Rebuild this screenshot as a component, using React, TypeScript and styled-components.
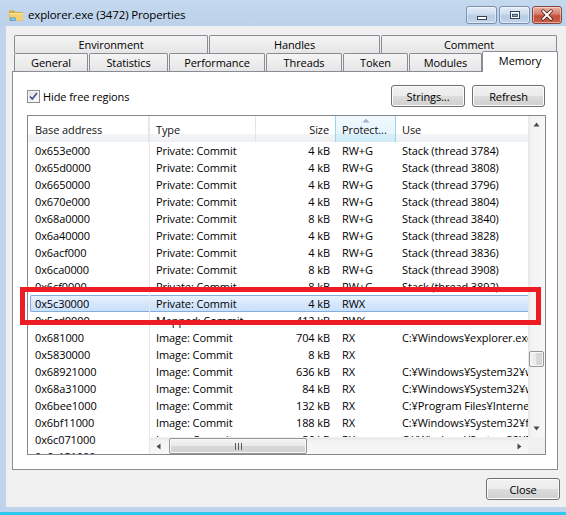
import React from 'react';
import styled, { createGlobalStyle, css } from 'styled-components';

const FONT = `"Open Sans", "Noto Sans", "Liberation Sans", sans-serif`;
const FS = '11px';
const LS = '-0.1px';

const GlobalStyle = createGlobalStyle`
  html, body { margin: 0; padding: 0; }
  body {
    font-family: ${FONT};
    font-size: ${FS};
    letter-spacing: ${LS};
    color: #000;
    background: #ffffff;
    overflow: hidden;
  }
  * { box-sizing: border-box; }
`;

const Window = styled.div`
  position: relative;
  width: 566px;
  height: 515px;
  display: flex;
  flex-direction: column;
  background: #bfd4ec;
  overflow: hidden;
`;

const TitleBar = styled.div`
  height: 26px;
  flex: none;
  display: flex;
  align-items: flex-start;
  padding-left: 8px;
  background: linear-gradient(#c4d8ee, #bcd2ea);
`;

const TitleIcon = styled.svg`
  width: 16px;
  height: 16px;
  margin-top: 7px;
  margin-right: 4px;
  flex: none;
`;

const TitleText = styled.div`
  font-size: 11.5px;
  line-height: 16px;
  margin-top: 7px;
  letter-spacing: -0.15px;
  color: #000;
`;

const CaptionGroup = styled.div`
  margin-left: auto;
  margin-top: 6px;
  margin-right: 4px;
  display: flex;
  gap: 2px;
`;

const CaptionButton = styled.div<{ $close?: boolean; $w: number }>`
  width: ${p => p.$w}px;
  height: 18px;
  border-radius: 3px;
  display: flex;
  align-items: center;
  justify-content: center;
  ${p =>
    p.$close
      ? css`
          border: 1px solid #85473c;
          background: linear-gradient(#eab3a6, #d47c6a 45%, #c44e39 55%, #c9604a);
        `
      : css`
          border: 1px solid #7890ae;
          background: linear-gradient(#e6eef8, #ccdbed 45%, #b7cbe4 55%, #c4d6ec);
        `}
  box-shadow: inset 0 0 0 1px rgba(255, 255, 255, 0.45);
`;

const Body = styled.div`
  flex: 1;
  display: flex;
  min-height: 0;
`;

const FrameSide = styled.div`
  width: 6px;
  flex: none;
  background: #bfd4ec;
`;

const Client = styled.div`
  flex: 1;
  display: flex;
  flex-direction: column;
  background: #f0f0f0;
  padding: 9px 6px 7px 6px;
`;

const BottomFrame = styled.div`
  height: 8px;
  flex: none;
  background: linear-gradient(#bfd4ec 0, #bfd4ec 5px, #2ec8ef 5px, #2ec8ef 100%);
`;

const TabRows = styled.div`
  display: flex;
  flex-direction: column;
  padding-left: 2px;
  position: relative;
  z-index: 1;
`;

const TabRow = styled.div`
  display: flex;
  gap: 1px;
  height: 18px;
  align-items: flex-start;
`;

const Tab = styled.div<{ $w: number; $active?: boolean }>`
  width: ${p => p.$w}px;
  height: 18px;
  flex: none;
  display: flex;
  align-items: center;
  justify-content: center;
  border: 1px solid #898c95;
  border-bottom: none;
  border-radius: 2px 2px 0 0;
  background: linear-gradient(#f4f4f4, #e6e6e6);
  color: #000;
  ${p =>
    p.$active &&
    css`
      height: 21px;
      margin-top: -2px;
      margin-left: -1px;
      background: #ffffff;
      padding-bottom: 3px;
    `}
`;

const Panel = styled.div`
  flex: 1;
  margin-right: 2px;
  border: 1px solid #898c95;
  background: #ffffff;
  display: flex;
  flex-direction: column;
  padding: 13px 11px 14px 14px;
  min-height: 0;
`;

const Toolbar = styled.div`
  height: 22px;
  flex: none;
  display: flex;
  align-items: center;
  margin-bottom: 8px;
  margin-right: 1px;
`;

const CheckLabel = styled.label`
  display: flex;
  align-items: center;
  gap: 3px;
`;

const CheckBox = styled.span`
  width: 13px;
  height: 13px;
  border: 1px solid #8e8f8f;
  background: linear-gradient(135deg, #dcdcdc, #ffffff);
  display: flex;
  align-items: center;
  justify-content: center;
  box-shadow: inset 0 0 0 1px #f4f4f4;
`;

const ButtonGroup = styled.div`
  margin-left: auto;
  display: flex;
  gap: 7px;
`;

const PushButton = styled.div<{ $w: number }>`
  width: ${p => p.$w}px;
  height: 22px;
  border: 1px solid #707070;
  border-radius: 3px;
  background: linear-gradient(#f2f2f2, #ebebeb 50%, #dddddd 50%, #cfcfcf);
  box-shadow: inset 0 0 0 1px #fcfcfc;
  display: flex;
  align-items: center;
  justify-content: center;
`;

const ListBox = styled.div`
  flex: 1;
  min-height: 0;
  border: 1px solid #828790;
  display: grid;
  grid-template-columns: 122px 1fr 17px;
  overflow: hidden;
  background: #ffffff;
`;

const FixedCol = styled.div`
  display: flex;
  flex-direction: column;
  min-height: 0;
  overflow: hidden;
  border-right: 1px solid #e8e8e8;
`;

const ScrollPart = styled.div`
  display: flex;
  flex-direction: column;
  min-width: 0;
  min-height: 0;
  overflow: hidden;
`;

const HeaderRow = styled.div`
  height: 26px;
  flex: none;
  display: flex;
  background: linear-gradient(#ffffff 0, #ffffff 68%, #f4f5f7 68%, #eff0f2 100%);
`;

const HeaderCell = styled.div<{ $w: number; $right?: boolean; $sorted?: boolean; $pl?: number }>`
  position: relative;
  width: ${p => p.$w}px;
  flex: none;
  height: 26px;
  display: flex;
  align-items: center;
  justify-content: ${p => (p.$right ? 'flex-end' : 'flex-start')};
  padding: 0 6px 0 ${p => p.$pl ?? 6}px;
  color: #111;
  white-space: nowrap;
  border-right: 1px solid #e3e5e8;
  ${p =>
    p.$sorted &&
    css`
      background: linear-gradient(#f0f9fe 0, #e6f5fd 68%, #d8eff9 68%, #d1ecf8 100%);
      border-left: 1px solid #9ad4f2;
      border-right: 1px solid #9ad4f2;
      margin-left: -1px;
    `}
`;

const SortArrow = styled.svg`
  position: absolute;
  top: 2px;
  left: 50%;
  margin-left: -4px;
  width: 8px;
  height: 5px;
`;

const RowsArea = styled.div`
  flex: 1;
  min-height: 0;
  overflow: hidden;
`;

const Row = styled.div<{ $sel?: boolean; $edge?: 'left' | 'right' }>`
  height: 17px;
  display: flex;
  align-items: center;
  white-space: nowrap;
  ${p =>
    p.$sel &&
    css`
      background: linear-gradient(#e9f2fd, #d6e7fc 50%, #c9e0fb);
      border-top: 1px solid #84acdd;
      border-bottom: 1px solid #84acdd;
      ${p.$edge === 'left'
        ? css`
            border-left: 1px solid #84acdd;
            border-radius: 2px 0 0 2px;
            margin-left: 2px;
          `
        : ''}
    `}
`;

const Cell = styled.div<{ $w: number; $right?: boolean; $pl?: number }>`
  width: ${p => p.$w}px;
  flex: none;
  overflow: hidden;
  text-align: ${p => (p.$right ? 'right' : 'left')};
  padding: 0 6px 0 ${p => p.$pl ?? 6}px;
  line-height: 15px;
`;

const HScroll = styled.div`
  height: 17px;
  flex: none;
  display: flex;
  align-items: stretch;
  background: linear-gradient(#e7e7e7, #f3f3f3 20%, #f7f7f7);
  border-top: 1px solid #f0f0f0;
`;

const ArrowBtn = styled.div`
  width: 17px;
  height: 17px;
  flex: none;
  display: flex;
  align-items: center;
  justify-content: center;
`;

const HTrack = styled.div`
  flex: 1;
  display: flex;
  align-items: stretch;
  padding: 0 1px;
`;

const HThumb = styled.div`
  width: 138px;
  margin: 0 0 0 1px;
  border: 1px solid #959595;
  border-radius: 2px;
  background: linear-gradient(#f4f4f4, #e8e8e8 50%, #d9d9d9 50%, #d2d2d2);
  box-shadow: inset 0 0 0 1px #f8f8f8;
  display: flex;
  align-items: center;
  justify-content: center;
`;

const VScrollCol = styled.div`
  display: flex;
  flex-direction: column;
  min-height: 0;
`;

const VScroll = styled.div`
  flex: 1;
  display: flex;
  flex-direction: column;
  background: linear-gradient(to right, #e7e7e7, #f3f3f3 20%, #f7f7f7);
`;

const VTrack = styled.div`
  flex: 1;
  padding: 218px 1px 0 1px;
`;

const VThumb = styled.div`
  height: 16px;
  border: 1px solid #959595;
  border-radius: 2px;
  background: linear-gradient(to right, #f4f4f4, #e8e8e8 50%, #d9d9d9 50%, #d2d2d2);
  box-shadow: inset 0 0 0 1px #f8f8f8;
`;

const Corner = styled.div`
  height: 17px;
  flex: none;
  background: #f0f0f0;
`;

const Footer = styled.div`
  flex: none;
  display: flex;
  justify-content: flex-end;
  margin-top: 8px;
`;

const Annotation = styled.div`
  position: absolute;
  left: 20px;
  top: 287px;
  width: 521px;
  height: 38px;
  border: 5px solid #ed1c24;
  pointer-events: none;
  z-index: 5;
`;

type R = [string, string, string, string, string];

const rows: R[] = [
  ['0x653e000', 'Private: Commit', '4 kB', 'RW+G', 'Stack (thread 3784)'],
  ['0x65d0000', 'Private: Commit', '4 kB', 'RW+G', 'Stack (thread 3808)'],
  ['0x6650000', 'Private: Commit', '4 kB', 'RW+G', 'Stack (thread 3796)'],
  ['0x670e000', 'Private: Commit', '4 kB', 'RW+G', 'Stack (thread 3804)'],
  ['0x68a0000', 'Private: Commit', '8 kB', 'RW+G', 'Stack (thread 3840)'],
  ['0x6a40000', 'Private: Commit', '4 kB', 'RW+G', 'Stack (thread 3828)'],
  ['0x6acf000', 'Private: Commit', '4 kB', 'RW+G', 'Stack (thread 3836)'],
  ['0x6ca0000', 'Private: Commit', '8 kB', 'RW+G', 'Stack (thread 3908)'],
  ['0x6cf0000', 'Private: Commit', '8 kB', 'RW+G', 'Stack (thread 3892)'],
  ['0x5c30000', 'Private: Commit', '4 kB', 'RWX', ''],
  ['0x5cd0000', 'Mapped: Commit', '412 kB', 'RWX', ''],
  ['0x681000', 'Image: Commit', '704 kB', 'RX', 'C:¥Windows¥explorer.exe'],
  ['0x5830000', 'Image: Commit', '8 kB', 'RX', ''],
  ['0x68921000', 'Image: Commit', '636 kB', 'RX', 'C:¥Windows¥System32¥wininet.dll'],
  ['0x68a31000', 'Image: Commit', '84 kB', 'RX', 'C:¥Windows¥System32¥wshext.dll'],
  ['0x6bee1000', 'Image: Commit', '132 kB', 'RX', 'C:¥Program Files¥Internet Explorer¥ieproxy.dll'],
  ['0x6bf11000', 'Image: Commit', '188 kB', 'RX', 'C:¥Windows¥System32¥framedyn.dll'],
  ['0x6c071000', 'Image: Commit', '56 kB', 'RX', 'C:¥Windows¥System32¥FirewallAPI.dll'],
  ['0x6c151000', 'Image: Commit', '48 kB', 'RX', 'C:¥Windows¥System32¥fwpuclnt.dll'],
];

const SELECTED = 9;

const FolderIcon = () => (
  <TitleIcon viewBox="0 0 16 16">
    <path d="M1 3.5h5l1.2 1.5H15v8.5H1z" fill="#d9a93d" />
    <path d="M1.5 6h13.5v7.5H1.5z" fill="#f3d16f" />
    <path d="M1.5 6h13.5v1.2H1.5z" fill="#fbe7a4" />
    <path d="M2 10.5h5.5v3.5H2z" fill="#3d8fd6" />
    <path d="M2.6 11.2h4.3v2.2H2.6z" fill="#8cc6f2" />
  </TitleIcon>
);

const MinGlyph = () => (
  <svg width="12" height="12" viewBox="0 0 12 12">
    <rect x="1.5" y="7.5" width="9" height="3" fill="#fff" stroke="#364458" />
  </svg>
);

const MaxGlyph = () => (
  <svg width="12" height="12" viewBox="0 0 12 12">
    <rect x="1.5" y="2.5" width="9" height="7" fill="none" stroke="#364458" />
    <rect x="2.5" y="3.5" width="7" height="5" fill="none" stroke="#fff" />
    <rect x="3.5" y="5.5" width="5" height="2" fill="#8fa6c2" stroke="#364458" strokeWidth="0.8" />
  </svg>
);

const CloseGlyph = () => (
  <svg width="12" height="12" viewBox="0 0 12 12">
    <path d="M2 2l8 8M10 2l-8 8" stroke="#4a1c14" strokeWidth="3.4" strokeLinecap="round" />
    <path d="M2 2l8 8M10 2l-8 8" stroke="#fff" strokeWidth="1.8" strokeLinecap="round" />
  </svg>
);

const CheckMark = () => (
  <svg width="9" height="9" viewBox="0 0 9 9">
    <path d="M1 4.5l2.3 2.6L8 1" fill="none" stroke="#3a5090" strokeWidth="1.6" />
  </svg>
);

const Tri = ({ dir }: { dir: 'up' | 'down' | 'left' | 'right' }) => {
  const pts: Record<string, string> = {
    up: '0.5,4.5 3.5,0.5 6.5,4.5',
    down: '0.5,0.5 3.5,4.5 6.5,0.5',
    left: '4.5,0.5 0.5,3.5 4.5,6.5',
    right: '0.5,0.5 4.5,3.5 0.5,6.5',
  };
  const vertical = dir === 'up' || dir === 'down';
  return (
    <svg width={vertical ? 7 : 5} height={vertical ? 5 : 7} viewBox={vertical ? '0 0 7 5' : '0 0 5 7'}>
      <polygon points={pts[dir]} fill="#4a4a4a" />
    </svg>
  );
};

const Grip = () => (
  <svg width="7" height="7" viewBox="0 0 7 7">
    <path d="M0.5 0v7M3.5 0v7M6.5 0v7" stroke="#5a5a5a" strokeWidth="1" />
  </svg>
);

const COLS = { type: 106, size: 80, prot: 60, use: 240 };

export default function App() {
  return (
    <>
      <GlobalStyle />
      <Window>
        <TitleBar>
          <FolderIcon />
          <TitleText>explorer.exe (3472) Properties</TitleText>
          <CaptionGroup>
            <CaptionButton $w={31}>
              <MinGlyph />
            </CaptionButton>
            <CaptionButton $w={31}>
              <MaxGlyph />
            </CaptionButton>
            <CaptionButton $w={30} $close>
              <CloseGlyph />
            </CaptionButton>
          </CaptionGroup>
        </TitleBar>
        <Body>
          <FrameSide />
          <Client>
            <TabRows>
              <TabRow>
                <Tab $w={194}>Environment</Tab>
                <Tab $w={171}>Handles</Tab>
                <Tab $w={176}>Comment</Tab>
              </TabRow>
              <TabRow>
                <Tab $w={74}>General</Tab>
                <Tab $w={79}>Statistics</Tab>
                <Tab $w={96}>Performance</Tab>
                <Tab $w={76}>Threads</Tab>
                <Tab $w={65}>Token</Tab>
                <Tab $w={73}>Modules</Tab>
                <Tab $w={76} $active>
                  Memory
                </Tab>
              </TabRow>
            </TabRows>
            <Panel>
              <Toolbar>
                <CheckLabel>
                  <CheckBox>
                    <CheckMark />
                  </CheckBox>
                  Hide free regions
                </CheckLabel>
                <ButtonGroup>
                  <PushButton $w={74}>Strings...</PushButton>
                  <PushButton $w={73}>Refresh</PushButton>
                </ButtonGroup>
              </Toolbar>
              <ListBox>
                <FixedCol>
                  <HeaderRow>
                    <HeaderCell $w={121} $pl={7}>
                      Base address
                    </HeaderCell>
                  </HeaderRow>
                  <RowsArea>
                    {rows.map((r, i) => (
                      <Row key={i} $sel={i === SELECTED} $edge="left">
                        <Cell $w={i === SELECTED ? 119 : 121} $pl={i === SELECTED ? 4 : 7}>
                          {r[0]}
                        </Cell>
                      </Row>
                    ))}
                  </RowsArea>
                </FixedCol>
                <ScrollPart>
                  <HeaderRow>
                    <HeaderCell $w={COLS.type}>Type</HeaderCell>
                    <HeaderCell $w={COLS.size} $right>
                      Size
                    </HeaderCell>
                    <HeaderCell $w={COLS.prot + 1} $sorted>
                      <SortArrow viewBox="0 0 8 5">
                        <polygon points="0.5,4.5 4,0.8 7.5,4.5" fill="#9fb2c6" />
                      </SortArrow>
                      Protect...
                    </HeaderCell>
                    <HeaderCell $w={COLS.use}>Use</HeaderCell>
                  </HeaderRow>
                  <RowsArea>
                    {rows.map((r, i) => (
                      <Row key={i} $sel={i === SELECTED} $edge="right">
                        <Cell $w={COLS.type}>{r[1]}</Cell>
                        <Cell $w={COLS.size} $right>
                          {r[2]}
                        </Cell>
                        <Cell $w={COLS.prot}>{r[3]}</Cell>
                        <Cell $w={COLS.use}>{r[4]}</Cell>
                      </Row>
                    ))}
                  </RowsArea>
                  <HScroll>
                    <ArrowBtn>
                      <Tri dir="left" />
                    </ArrowBtn>
                    <HTrack>
                      <HThumb>
                        <Grip />
                      </HThumb>
                    </HTrack>
                    <ArrowBtn>
                      <Tri dir="right" />
                    </ArrowBtn>
                  </HScroll>
                </ScrollPart>
                <VScrollCol>
                  <VScroll>
                    <ArrowBtn>
                      <Tri dir="up" />
                    </ArrowBtn>
                    <VTrack>
                      <VThumb />
                    </VTrack>
                    <ArrowBtn>
                      <Tri dir="down" />
                    </ArrowBtn>
                  </VScroll>
                  <Corner />
                </VScrollCol>
              </ListBox>
            </Panel>
            <Footer>
              <PushButton $w={74}>Close</PushButton>
            </Footer>
          </Client>
        </Body>
        <BottomFrame />
        <Annotation />
      </Window>
    </>
  );
}
